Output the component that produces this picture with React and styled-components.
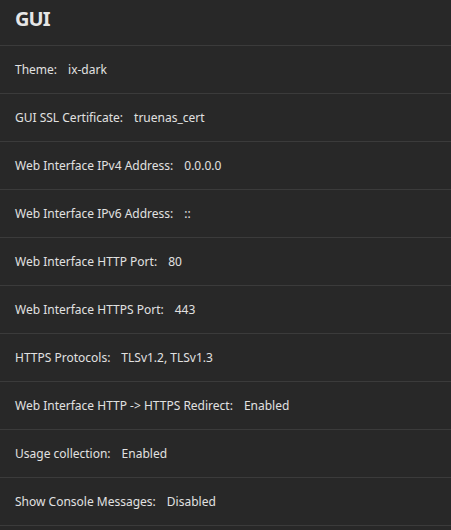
import React from 'react';
import styled, { createGlobalStyle } from 'styled-components';

const GlobalStyle = createGlobalStyle`
    body {
        margin: 0;
        background: #282828;
        font-family: "Noto Sans", "Open Sans", sans-serif;
    }
`;

const Card = styled.div`
    width: 451px;
    height: 530px;
    background: #282828;
    color: #e1e1e1;
    overflow: hidden;
`;

const Header = styled.div`
    height: 46px;
    display: flex;
    align-items: center;
    padding: 0 15px 8px;
    box-sizing: border-box;
    border-bottom: 1px solid #3b3b3b;
    h3 {
        margin: 0;
        font-size: 20px;
        font-weight: 700;
        letter-spacing: -0.9px;
        color: #e6e6e6;
    }
`;

const Row = styled.div`
    height: 48px;
    display: flex;
    align-items: center;
    padding: 0 15px 1px;
    box-sizing: border-box;
    border-bottom: 1px solid #3b3b3b;
    font-size: 12px;
    letter-spacing: 0;
`;

const Label = styled.span`
    margin-right: 11px;
`;

const Value = styled.span``;

const items = [
    ['Theme:', 'ix-dark'],
    ['GUI SSL Certificate:', 'truenas_cert'],
    ['Web Interface IPv4 Address:', '0.0.0.0'],
    ['Web Interface IPv6 Address:', '::'],
    ['Web Interface HTTP Port:', '80'],
    ['Web Interface HTTPS Port:', '443'],
    ['HTTPS Protocols:', 'TLSv1.2, TLSv1.3'],
    ['Web Interface HTTP -> HTTPS Redirect:', 'Enabled'],
    ['Usage collection:', 'Enabled'],
    ['Show Console Messages:', 'Disabled'],
];

const App = () => (
    <>
        <GlobalStyle />
        <Card>
            <Header><h3>GUI</h3></Header>
            {items.map(([label, value]) => (
                <Row key={label}>
                    <Label>{label}</Label>
                    <Value>{value}</Value>
                </Row>
            ))}
        </Card>
    </>
);

export default App;
